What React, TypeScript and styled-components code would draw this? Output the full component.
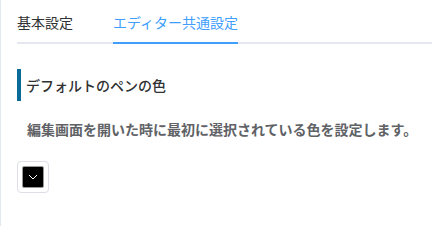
import React, { useState } from "react"
import styled, { createGlobalStyle } from "styled-components"

const GlobalStyle = createGlobalStyle`
  body {
    margin: 0;
    background: #fff;
    font-family: "Noto Sans CJK JP", "Noto Sans", sans-serif;
  }
`

const Page = styled.div`
  box-sizing: border-box;
  height: 226px;
  padding: 2px 0 0 16px;
  border-left: 1px solid #e2e9ec;
`

const TabNav = styled.div`
  display: flex;
  border-bottom: 2px solid #e4e7ed;
`

const Tab = styled.div<{ $active?: boolean }>`
  height: 40px;
  line-height: 40px;
  margin: 0 20px -2px;
  font-size: 14px;
  color: ${(p) => (p.$active ? "#409eff" : "#303133")};
  border-bottom: 2px solid ${(p) => (p.$active ? "#409eff" : "transparent")};
  cursor: pointer;
  &:first-child {
    margin-left: 0;
  }
`

const Heading = styled.h3`
  margin: 25px 0 0;
  height: 32px;
  line-height: 32px;
  padding-left: 5px;
  border-left: 4px solid #0a6a9a;
  font-size: 14px;
  font-weight: 500;
  color: #303133;
`

const Description = styled.p`
  margin: 18px 0 0;
  padding-left: 10px;
  font-size: 14px;
  line-height: 20px;
  font-weight: bold;
  color: #606266;
`

const PickerTrigger = styled.button`
  display: block;
  box-sizing: border-box;
  width: 32px;
  height: 32px;
  margin-top: 22px;
  padding: 4px;
  border: 1px solid #dcdfe6;
  border-radius: 4px;
  background: #fff;
  cursor: pointer;
`

const ColorBlock = styled.span<{ $color: string }>`
  display: flex;
  align-items: center;
  justify-content: center;
  box-sizing: border-box;
  width: 22px;
  height: 22px;
  border: 1px solid #999;
  border-radius: 2px;
  background: ${(p) => p.$color};
`

const tabs = ["基本設定", "エディター共通設定"]

export default function App() {
  const [active, setActive] = useState(1)
  return (
    <>
      <GlobalStyle />
      <Page>
        <TabNav>
          {tabs.map((t, i) => (
            <Tab key={t} $active={i === active} onClick={() => setActive(i)}>
              {t}
            </Tab>
          ))}
        </TabNav>
        <Heading>デフォルトのペンの色</Heading>
        <Description>編集画面を開いた時に最初に選択されている色を設定します。</Description>
        <PickerTrigger>
          <ColorBlock $color="#000">
            <svg width="10" height="6" viewBox="0 0 10 6">
              <polyline points="1,1 5,5 9,1" fill="none" stroke="#fff" strokeWidth="1" />
            </svg>
          </ColorBlock>
        </PickerTrigger>
      </Page>
    </>
  )
}
